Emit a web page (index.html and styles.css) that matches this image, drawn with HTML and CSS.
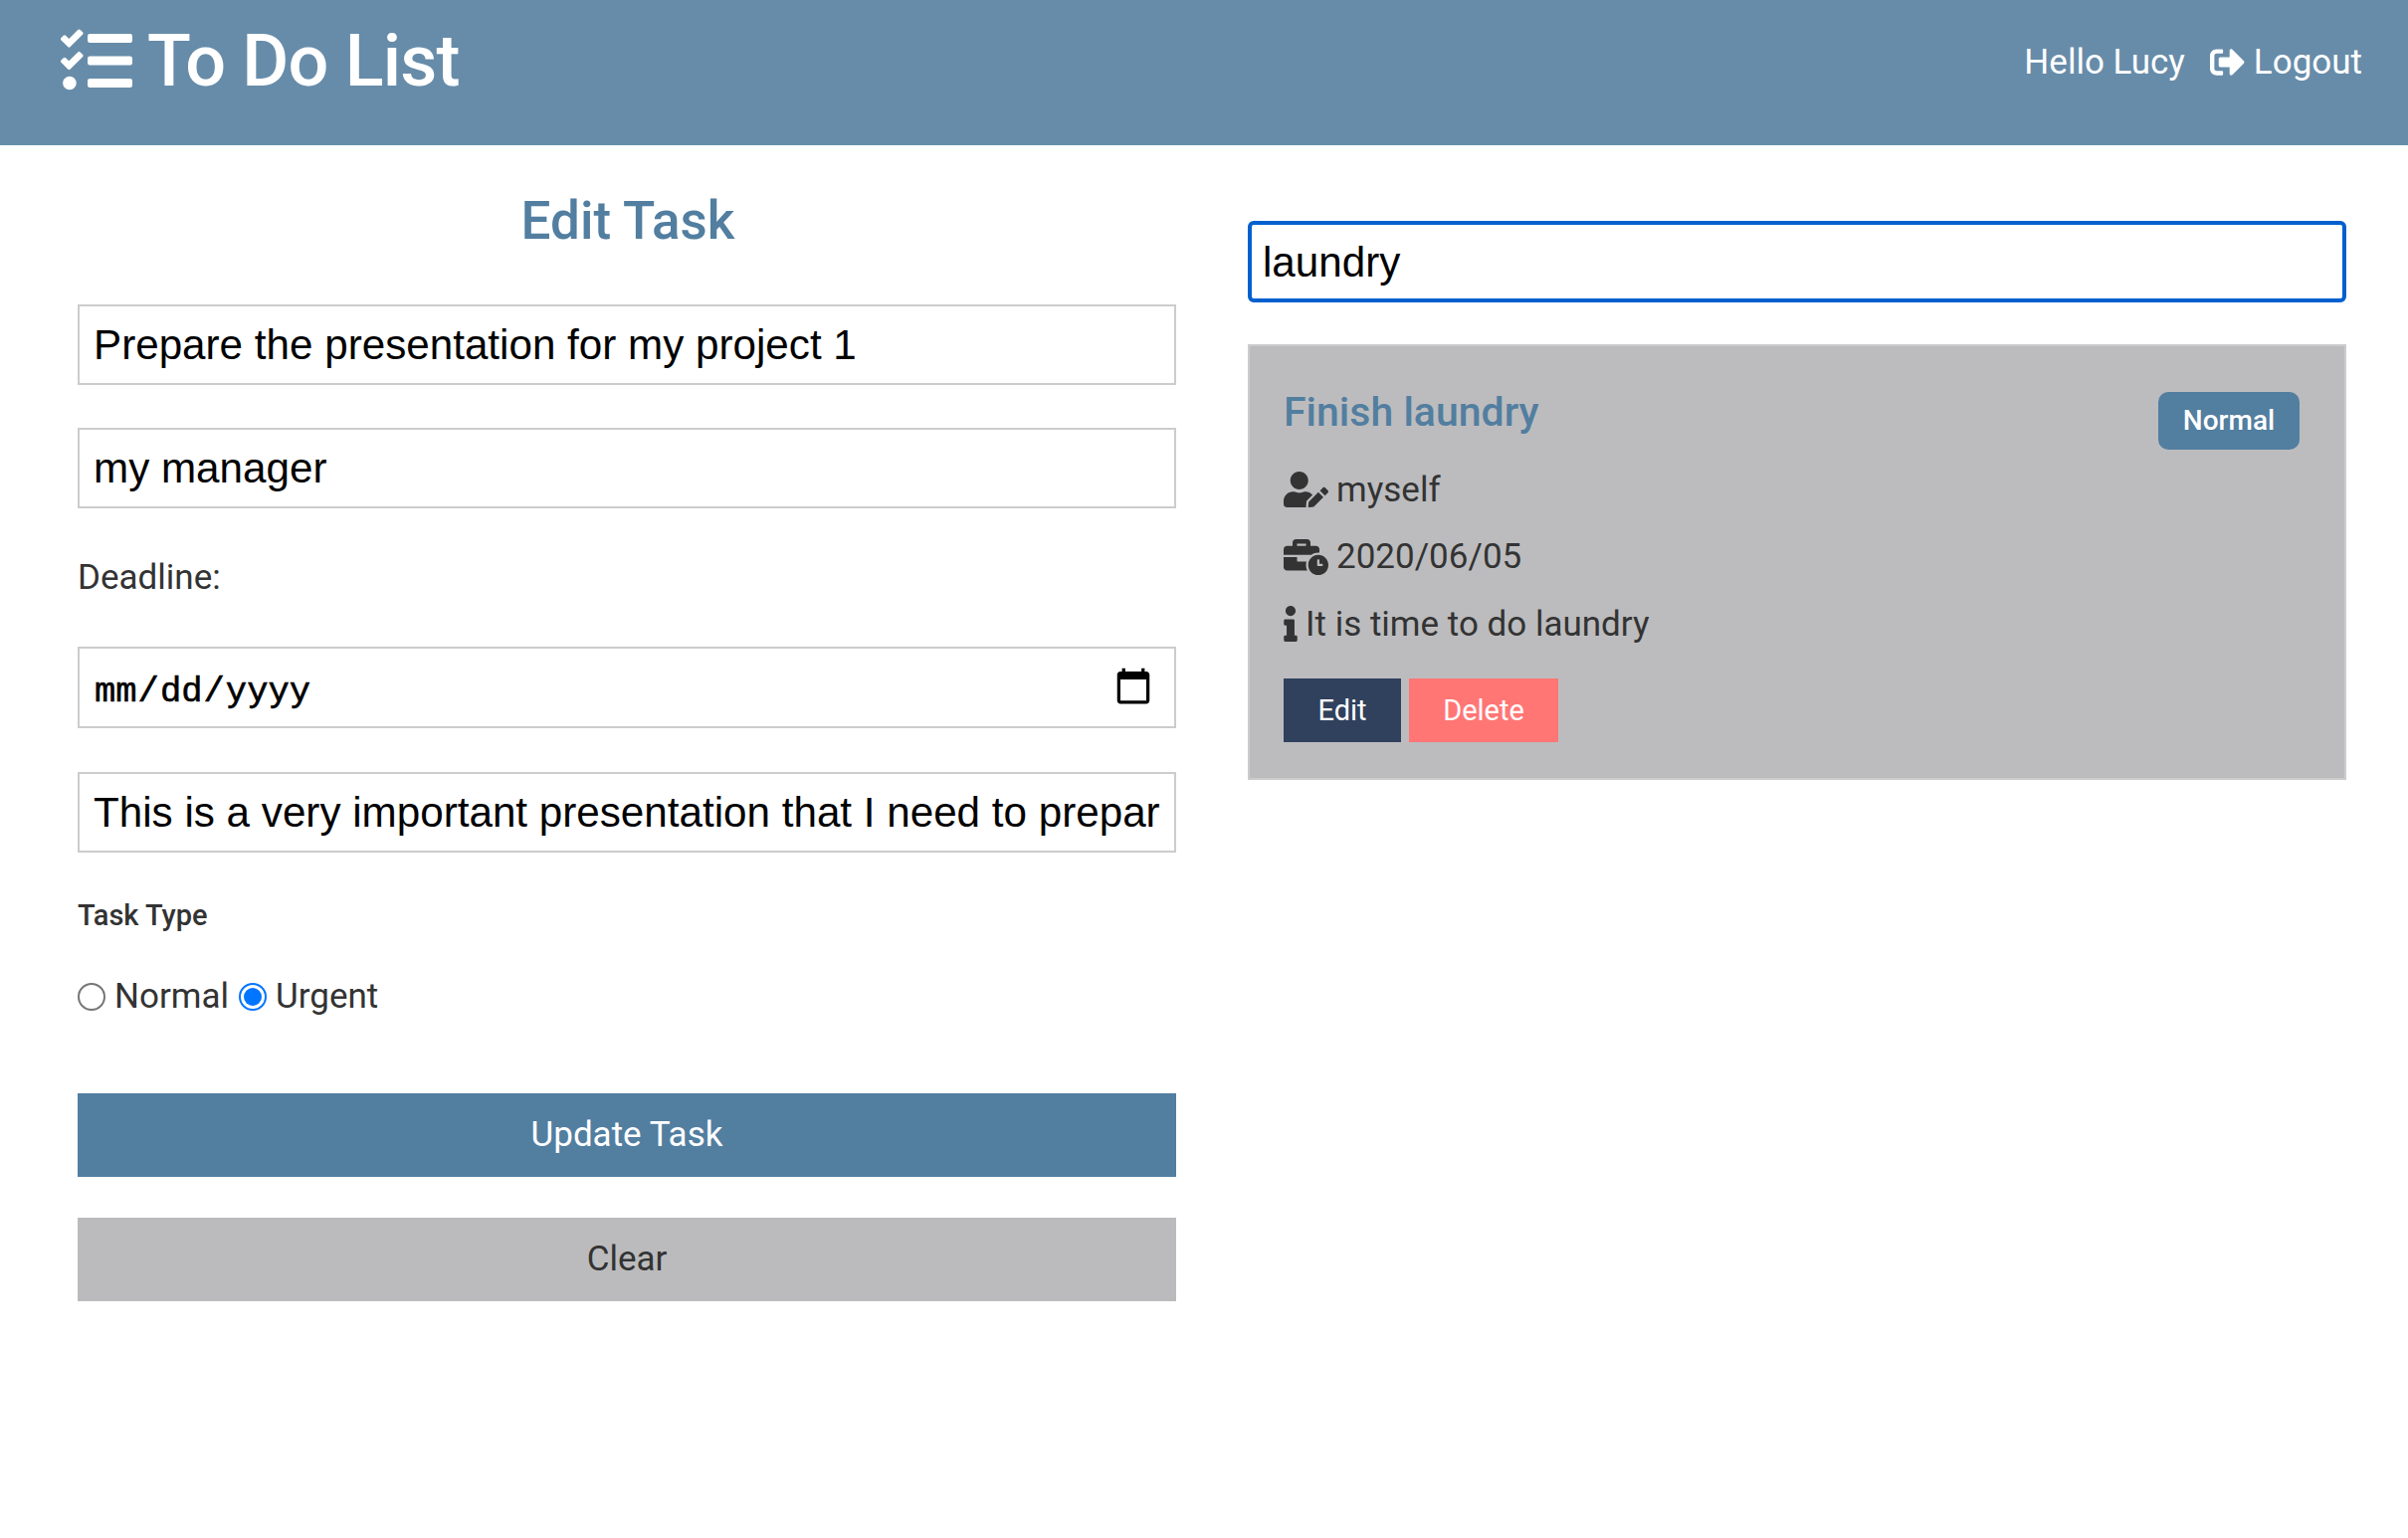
FILE: index.html
```html
<!doctype html>
<html>
<head>
<meta charset=utf-8>
<title>To Do List</title>
<link rel="stylesheet" href="styles.css">
</head>
<body>

<header class="topbar">
  <div class="brand">
    <svg class="brand-icon" viewBox="0 0 512 512"><path d="M139.61 35.5a12 12 0 0 0-17 0L58.93 98.81l-22.7-22.12a12 12 0 0 0-17 0L3.53 92.41a12 12 0 0 0 0 17l47.59 47.4a12.78 12.78 0 0 0 17.61 0l15.59-15.62L156.52 69a12.09 12.09 0 0 0 .09-17zm0 159.19a12 12 0 0 0-17 0l-63.68 63.72-22.7-22.1a12 12 0 0 0-17 0L3.53 252a12 12 0 0 0 0 17L51 316.5a12.77 12.77 0 0 0 17.6 0l15.7-15.69 72.2-72.22a12 12 0 0 0 .09-16.9zM64 368c-26.49 0-48.59 21.5-48.59 48S37.53 464 64 464a48 48 0 0 0 0-96zm432 16H208a16 16 0 0 0-16 16v32a16 16 0 0 0 16 16h288a16 16 0 0 0 16-16v-32a16 16 0 0 0-16-16zm0-320H208a16 16 0 0 0-16 16v32a16 16 0 0 0 16 16h288a16 16 0 0 0 16-16V80a16 16 0 0 0-16-16zm0 160H208a16 16 0 0 0-16 16v32a16 16 0 0 0 16 16h288a16 16 0 0 0 16-16v-32a16 16 0 0 0-16-16z"/></svg>
    <span>To Do List</span>
  </div>
  <nav class="usernav">
    <span>Hello Lucy</span>
    <a class="logout">
      <svg class="logout-icon" viewBox="0 0 512 512"><path d="M497 273L329 441c-15 15-41 4.5-41-17v-96H152c-13.3 0-24-10.7-24-24v-96c0-13.3 10.7-24 24-24h136V88c0-21.4 25.9-32 41-17l168 168c9.3 9.4 9.3 24.6 0 34zM192 436v-40c0-6.6-5.4-12-12-12H96c-17.7 0-32-14.3-32-32V160c0-17.7 14.3-32 32-32h84c6.6 0 12-5.4 12-12V76c0-6.6-5.4-12-12-12H96c-53 0-96 43-96 96v192c0 53 43 96 96 96h84c6.6 0 12-5.4 12-12z"/></svg>
      Logout
    </a>
  </nav>
</header>

<main class="columns">
  <section class="editor">
    <h1>Edit Task</h1>
    <form>
      <input class="field" type="text" value="Prepare the presentation for my project 1">
      <input class="field" type="text" value="my manager">
      <label class="deadline-label">Deadline:</label>
      <input class="field field-date" type="date">
      <input class="field" type="text" value="This is a very important presentation that I need to prepare for my manager">
      <label class="type-label">Task Type</label>
      <div class="radios">
        <input type="radio" name="type" id="normal"><label for="normal">Normal</label>
        <input type="radio" name="type" id="urgent" checked><label for="urgent">Urgent</label>
      </div>
      <button class="btn btn-update" type="button">Update Task</button>
      <button class="btn btn-clear" type="button">Clear</button>
    </form>
  </section>

  <section class="results">
    <input class="search" type="text" value="laundry">
    <article class="card">
      <div class="card-head">
        <h2>Finish laundry</h2>
        <span class="badge">Normal</span>
      </div>
      <p class="meta">
        <svg class="meta-icon" viewBox="0 0 640 512"><path d="M224 256c70.7 0 128-57.3 128-128S294.7 0 224 0 96 57.3 96 128s57.3 128 128 128zm89.6 32h-16.7c-22.2 10.2-46.9 16-72.9 16s-50.6-5.8-72.9-16h-16.7C60.2 288 0 348.2 0 422.4V464c0 26.5 21.5 48 48 48h274.9c-2.4-6.8-3.4-14-2.6-21.3l6.8-60.9 1.2-11.1 7.9-7.9 77.3-77.3c-24.5-27.7-60-45.5-99.9-45.5zm45.3 145.3l-6.8 61c-1.1 10.2 7.5 18.8 17.6 17.6l60.9-6.8 137.9-137.9-71.7-71.7-137.9 137.8zM633 268.9L595.1 231c-9.3-9.3-24.5-9.3-33.8 0l-37.8 37.8-4.1 4.1 71.8 71.7 41.8-41.8c9.3-9.4 9.3-24.5 0-33.9z"/></svg>
        myself
      </p>
      <p class="meta">
        <svg class="meta-icon" viewBox="0 0 640 512"><path d="M496 224c-79.59 0-144 64.41-144 144s64.41 144 144 144 144-64.41 144-144-64.41-144-144-144zm64 150.29c0 5.34-4.37 9.71-9.71 9.71h-60.57c-5.34 0-9.71-4.37-9.71-9.71v-76.57c0-5.34 4.37-9.71 9.71-9.71h12.57c5.34 0 9.71 4.37 9.71 9.71V352h38.29c5.34 0 9.71 4.37 9.71 9.71v12.58zM496 192c5.4 0 10.72.33 16 .81V144c0-25.6-22.4-48-48-48h-80V48c0-25.6-22.4-48-48-48H176c-25.6 0-48 22.4-48 48v48H48c-25.6 0-48 22.4-48 48v80h395.12c28.6-20.09 63.35-32 100.88-32zM320 96H192V64h128v32zm6.82 224H208c-8.84 0-16-7.16-16-16v-48H0v144c0 25.6 22.4 48 48 48h291.43C327.1 423.96 320 396.82 320 368c0-16.66 2.48-32.72 6.82-48z"/></svg>
        2020/06/05
      </p>
      <p class="meta">
        <svg class="meta-icon meta-icon-info" viewBox="0 0 192 512"><path d="M20 424.229h20V279.771H20c-11.046 0-20-8.954-20-20V212c0-11.046 8.954-20 20-20h112c11.046 0 20 8.954 20 20v212.229h20c11.046 0 20 8.954 20 20V492c0 11.046-8.954 20-20 20H20c-11.046 0-20-8.954-20-20v-47.771c0-11.046 8.954-20 20-20zM96 0C56.235 0 24 32.235 24 72s32.235 72 72 72 72-32.235 72-72S135.764 0 96 0z"/></svg>
        It is time to do laundry
      </p>
      <div class="card-actions">
        <button class="btn-small btn-edit" type="button">Edit</button>
        <button class="btn-small btn-delete" type="button">Delete</button>
      </div>
    </article>
  </section>
</main>

</body>
</html>
```

FILE: styles.css
```css
* {
  box-sizing: border-box;
}

body {
  margin: 0;
  height: 1546px;
  background: #fff;
  color: #333;
  font-family: Roboto, sans-serif;
  font-size: 35px;
  overflow: hidden;
}

/* top bar */
.topbar {
  height: 146px;
  background: #678ca9;
  color: #fff;
  display: flex;
  justify-content: space-between;
  align-items: flex-start;
  padding: 0 46px 0 61px;
}

.brand {
  display: flex;
  align-items: center;
  gap: 15px;
  height: 122px;
  font-size: 72px;
  font-weight: 500;
  letter-spacing: -0.8px;
}

.brand-icon {
  width: 72px;
  height: 72px;
  fill: #fff;
}

.usernav {
  display: flex;
  align-items: center;
  gap: 25px;
  height: 124px;
}

.logout {
  display: flex;
  align-items: center;
  gap: 9px;
}

.logout-icon {
  width: 35px;
  height: 35px;
  fill: #fff;
}

/* two columns */
.columns {
  display: grid;
  grid-template-columns: 1104px 1104px;
  column-gap: 72px;
  padding: 0 62px 0 78px;
}

.editor h1 {
  margin: 43px 0 51px;
  padding-left: 2px;
  color: #527ea0;
  font-size: 53px;
  font-weight: 500;
  line-height: 66px;
  text-align: center;
}

.field {
  display: block;
  width: 100%;
  height: 81px;
  margin-bottom: 43px;
  padding: 1px 14px 0;
  border: 2px solid #ccc;
  border-radius: 0;
  background: #fff;
  color: #000;
  font-family: "Liberation Sans", sans-serif;
  font-size: 42.2px;
  outline: none;
}

.field-date {
  height: 82px;
  margin-bottom: 44px;
  padding: 8px 14px 0;
  font-family: "Liberation Mono", monospace;
  font-size: 35.5px;
  -webkit-text-stroke: 0.6px #000;
}

.field-date::-webkit-calendar-picker-indicator {
  width: 42px;
  height: 42px;
  margin: -8px 6px 0 0;
  padding: 0;
}

.deadline-label {
  display: block;
  margin: 49px 0 48px;
  line-height: 42px;
}

.type-label {
  display: block;
  margin: 0 0 42px;
  padding-top: 1.5px;
  font-size: 29px;
  font-weight: 500;
  line-height: 36px;
}

.radios {
  display: flex;
  align-items: center;
  height: 44px;
  margin-bottom: 75px;
}

.radios input {
  appearance: none;
  flex: none;
  width: 28px;
  height: 28px;
  margin: 0 9px 0 0;
  padding: 3px;
  border: 2.5px solid #767676;
  border-radius: 50%;
  background-clip: content-box;
}

.radios input:checked {
  border-color: #0075ff;
  background-color: #0075ff;
}

.radios label {
  margin-right: 10px;
}

.btn {
  display: block;
  width: 100%;
  height: 84px;
  margin-bottom: 41px;
  border: 0;
  font-family: Roboto, sans-serif;
  font-size: 35px;
}

.btn-update {
  background: #527ea0;
  color: #fff;
}

.btn-clear {
  background: #bbbbbd;
  color: #333;
}

/* search and results */
.search {
  display: block;
  width: 100%;
  height: 82px;
  margin: 76px 0 42px;
  padding: 1px 11px 0;
  border: 4px solid #0060cf;
  border-radius: 6px;
  color: #000;
  font-family: "Liberation Sans", sans-serif;
  font-size: 42.2px;
  outline: none;
}

.card {
  height: 438px;
  padding: 40px 45px 0 34px;
  background: #bcbcbe;
  border: 2px solid #ccc;
}

.card-head {
  display: flex;
  justify-content: space-between;
  align-items: flex-start;
  margin-bottom: 19px;
}

.card-head h2 {
  margin: 0;
  color: #527ea0;
  font-size: 41px;
  font-weight: 500;
  line-height: 52px;
}

.badge {
  margin-top: 6px;
  width: 142px;
  background: #527ea0;
  border-radius: 10px;
  color: #fff;
  font-size: 28px;
  font-weight: 500;
  line-height: 58px;
  text-align: center;
}

.meta {
  display: flex;
  align-items: center;
  gap: 8px;
  height: 42px;
  margin: 0 0 25.5px;
}

.meta-icon {
  width: 45px;
  height: 36px;
  fill: #333;
}

.meta-icon-info {
  width: 14px;
}

.card-actions {
  display: flex;
  gap: 8px;
  margin-top: 34px;
}

.btn-small {
  height: 64px;
  border: 0;
  color: #fff;
  font-family: Roboto, sans-serif;
  font-size: 29px;
}

.btn-edit {
  width: 118px;
  background: #30415d;
}

.btn-delete {
  width: 150px;
  background: #ff7675;
}
```
